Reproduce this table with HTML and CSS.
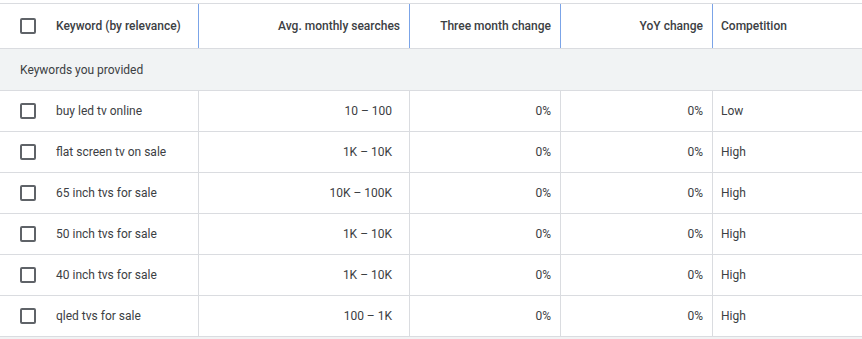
FILE: index.html
```html
<!DOCTYPE html>
<html lang="en">
    <head>
        <meta charset="UTF-8" />
        <meta name="viewport" content="width=device-width, initial-scale=1.0" />
        <title>Keyword ideas</title>
        <link rel="stylesheet" href="styles.css">
    </head>
    <body>
        <div class="kw-table">
            <div class="kw-row kw-head">
                <div class="cell cell-keyword"><span class="checkbox"></span>Keyword (by relevance)</div>
                <div class="cell num head-searches">Avg. monthly searches</div>
                <div class="cell num">Three month change</div>
                <div class="cell num">YoY change</div>
                <div class="cell">Competition</div>
            </div>
            <div class="kw-group">Keywords you provided</div>
            <div class="kw-row">
                <div class="cell cell-keyword"><span class="checkbox"></span>buy led tv online</div>
                <div class="cell num searches">10 – 100</div>
                <div class="cell num">0%</div>
                <div class="cell num">0%</div>
                <div class="cell">Low</div>
            </div>
            <div class="kw-row">
                <div class="cell cell-keyword"><span class="checkbox"></span>flat screen tv on sale</div>
                <div class="cell num searches">1K – 10K</div>
                <div class="cell num">0%</div>
                <div class="cell num">0%</div>
                <div class="cell">High</div>
            </div>
            <div class="kw-row">
                <div class="cell cell-keyword"><span class="checkbox"></span>65 inch tvs for sale</div>
                <div class="cell num searches">10K – 100K</div>
                <div class="cell num">0%</div>
                <div class="cell num">0%</div>
                <div class="cell">High</div>
            </div>
            <div class="kw-row">
                <div class="cell cell-keyword"><span class="checkbox"></span>50 inch tvs for sale</div>
                <div class="cell num searches">1K – 10K</div>
                <div class="cell num">0%</div>
                <div class="cell num">0%</div>
                <div class="cell">High</div>
            </div>
            <div class="kw-row">
                <div class="cell cell-keyword"><span class="checkbox"></span>40 inch tvs for sale</div>
                <div class="cell num searches">1K – 10K</div>
                <div class="cell num">0%</div>
                <div class="cell num">0%</div>
                <div class="cell">High</div>
            </div>
            <div class="kw-row">
                <div class="cell cell-keyword"><span class="checkbox"></span>qled tvs for sale</div>
                <div class="cell num searches">100 – 1K</div>
                <div class="cell num">0%</div>
                <div class="cell num">0%</div>
                <div class="cell">High</div>
            </div>
            <div class="kw-footer"></div>
        </div>
    </body>
</html>
```

FILE: styles.css
```css
:root {
  --text: #3c4043;
  --border: #dadce0;
  --group-bg: #f1f3f4;
  --accent: #7ba4e8;
  --check: #5f6368;
  --font: 'Roboto', 'Liberation Sans', sans-serif;
}

* {
  box-sizing: border-box;
  margin: 0;
  padding: 0;
}

body {
  font-family: var(--font);
  font-size: 12px;
  color: var(--text);
  background: #ffffff;
  padding-top: 3px;
}

.kw-table {
  border-top: 1px solid var(--border);
}

.kw-row {
  display: grid;
  grid-template-columns: 199px 211px 151px 152px 1fr;
  height: 41px;
  border-bottom: 1px solid var(--border);
}

.cell {
  display: flex;
  align-items: center;
  padding: 0 8px;
  border-right: 1px solid var(--border);
  white-space: nowrap;
}

.cell:last-child {
  border-right: none;
}

.cell.num {
  justify-content: flex-end;
  padding-right: 9px;
}

.cell.searches {
  padding-right: 17px;
}

.cell-keyword {
  padding-left: 20px;
}

.checkbox {
  width: 16px;
  height: 16px;
  border: 2px solid var(--check);
  border-radius: 2px;
  margin-right: 20px;
  flex-shrink: 0;
}

.kw-head {
  height: 45px;
  font-weight: 500;
}

.kw-head .cell {
  border-right-color: var(--accent);
}

.kw-head .cell:last-child {
  border-right: none;
}

.kw-group {
  height: 42px;
  display: flex;
  align-items: center;
  padding-left: 20px;
  background: var(--group-bg);
  border-bottom: 1px solid var(--border);
}

.kw-footer {
  height: 3px;
  background: var(--group-bg);
}
```
